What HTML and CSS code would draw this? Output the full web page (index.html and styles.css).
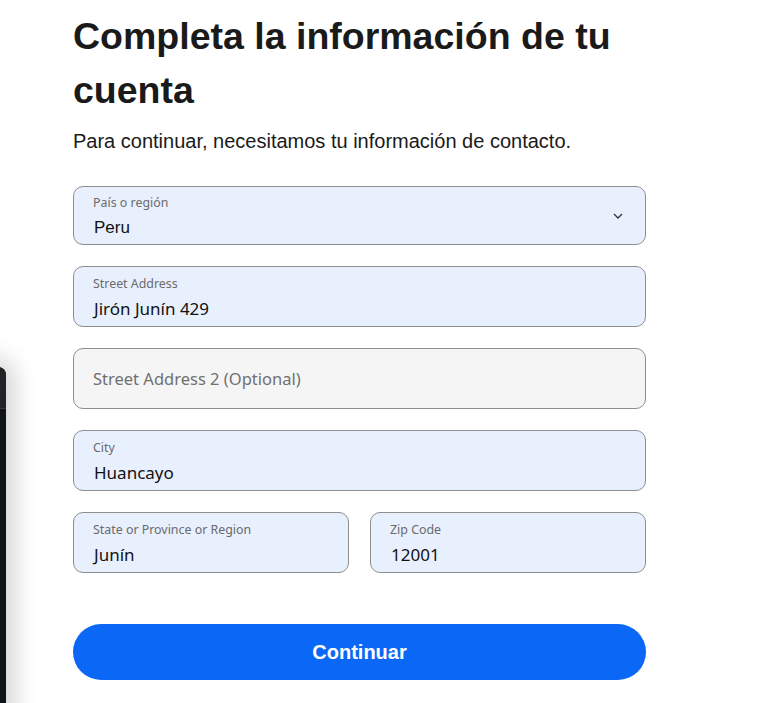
FILE: index.html
```html
<!DOCTYPE html>
<html lang="es">
<head>
<meta charset="utf-8">
<link rel="stylesheet" href="styles.css">
</head>
<body>
<div class="side-window"><div class="side-top"></div></div>
<main class="page">
  <h1 class="title">Completa la información de tu cuenta</h1>
  <p class="subtitle">Para continuar, necesitamos tu información de contacto.</p>
  <form class="form">
    <div class="field field-select">
      <span class="label">País o región</span>
      <span class="value value-arial">Peru</span>
      <svg class="chev" width="10" height="6" viewBox="0 0 10 6"><path d="M1 1l4 4 4-4" fill="none" stroke="#333" stroke-width="1.3"/></svg>
    </div>
    <div class="field">
      <span class="label">Street Address</span>
      <span class="value">Jirón Junín 429</span>
    </div>
    <div class="field field-empty">
      <span class="placeholder">Street Address 2 (Optional)</span>
    </div>
    <div class="field">
      <span class="label">City</span>
      <span class="value">Huancayo</span>
    </div>
    <div class="row">
      <div class="field">
        <span class="label">State or Province or Region</span>
        <span class="value">Junín</span>
      </div>
      <div class="field">
        <span class="label">Zip Code</span>
        <span class="value">12001</span>
      </div>
    </div>
    <button type="button" class="btn">Continuar</button>
  </form>
</main>
</body>
</html>
```
FILE: styles.css
```css
html, body {
  margin: 0;
  padding: 0;
  background: #fff;
}
body {
  font-family: "Liberation Sans", Arial, sans-serif;
  color: #1a1a1a;
  overflow: hidden;
  height: 703px;
}
.page {
  padding: 9px 0 0 73px;
  width: 573px;
}
.title {
  margin: 0;
  font-size: 37.5px;
  line-height: 54px;
  font-weight: 700;
  color: #1a1a1a;
}
.subtitle {
  margin: 10px 0 0;
  font-size: 20px;
  line-height: 28px;
  color: #1a1a1a;
}
.form {
  margin-top: 31px;
  display: flex;
  flex-direction: column;
  gap: 21px;
}
.row {
  display: flex;
  gap: 21px;
}
.row .field {
  flex: 1;
}
.field {
  position: relative;
  box-sizing: border-box;
  height: 61px;
  border: 1px solid #8e8e8e;
  border-radius: 10px;
  background: #e8f0fe;
  padding: 9px 19px 0;
  display: flex;
  flex-direction: column;
  font-family: "Noto Sans", "Open Sans", sans-serif;
}
.field-select {
  height: 59px;
  padding-top: 8px;
}
.label {
  font-size: 12.4px;
  line-height: 16px;
  color: #6b6b6b;
}
.value {
  margin-top: 6px;
  padding-left: 1px;
  font-size: 17px;
  line-height: 22px;
  color: #111;
}
.value-arial {
  font-family: "Liberation Sans", Arial, sans-serif;
  font-size: 17px;
}
.field-empty {
  background: #f5f5f5;
  padding-top: 0;
  justify-content: center;
}
.placeholder {
  font-size: 16.5px;
  color: #707070;
}
.chev {
  position: absolute;
  right: 22px;
  top: 26px;
}
.btn {
  margin-top: 30px;
  height: 56px;
  border: none;
  border-radius: 28px;
  background: #0b68f6;
  color: #fff;
  font-family: "Liberation Sans", Arial, sans-serif;
  font-size: 20px;
  font-weight: 700;
}
.side-window {
  position: absolute;
  left: -20px;
  top: 367px;
  width: 26px;
  height: 400px;
  background: #111417;
  border-top-right-radius: 8px;
  box-shadow: 0 0 24px 8px rgba(0,0,0,0.18);
  overflow: hidden;
}
.side-top {
  height: 41px;
  background: #222327;
  border-bottom: 1px solid #3a3b3f;
}
```
